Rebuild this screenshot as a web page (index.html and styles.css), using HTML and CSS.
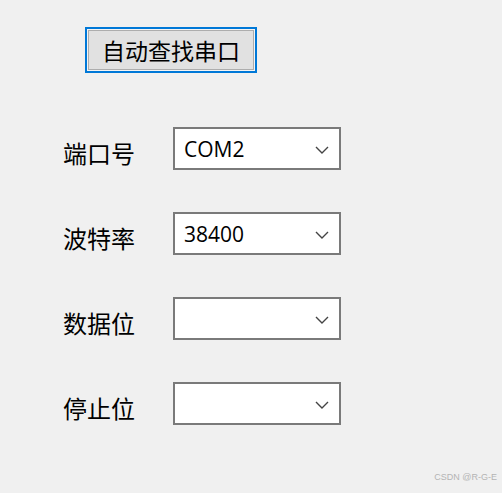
FILE: index.html
```html
<!DOCTYPE html>
<html lang="zh-CN">
<head>
  <meta charset="UTF-8" />
  <title>串口设置</title>
  <link rel="stylesheet" href="styles.css">
</head>
<body>

<div class="window">
  <button class="find-btn">自动查找串口</button>

  <div class="form">
    <div class="row">
      <span class="label">端口号</span>
      <div class="combo">
        <span class="value">COM2</span>
        <svg class="arrow" width="14" height="8" viewBox="0 0 14 8"><path d="M1 1 L7 7 L13 1" fill="none" stroke="#444" stroke-width="1.4"/></svg>
      </div>
    </div>
    <div class="row">
      <span class="label">波特率</span>
      <div class="combo">
        <span class="value">38400</span>
        <svg class="arrow" width="14" height="8" viewBox="0 0 14 8"><path d="M1 1 L7 7 L13 1" fill="none" stroke="#444" stroke-width="1.4"/></svg>
      </div>
    </div>
    <div class="row">
      <span class="label">数据位</span>
      <div class="combo">
        <span class="value"></span>
        <svg class="arrow" width="14" height="8" viewBox="0 0 14 8"><path d="M1 1 L7 7 L13 1" fill="none" stroke="#444" stroke-width="1.4"/></svg>
      </div>
    </div>
    <div class="row">
      <span class="label">停止位</span>
      <div class="combo">
        <span class="value"></span>
        <svg class="arrow" width="14" height="8" viewBox="0 0 14 8"><path d="M1 1 L7 7 L13 1" fill="none" stroke="#444" stroke-width="1.4"/></svg>
      </div>
    </div>
  </div>

  <div class="watermark">CSDN @R-G-E</div>
</div>

</body>
</html>
```

FILE: styles.css
```css
* {
  margin: 0;
  padding: 0;
  box-sizing: border-box;
}

body {
  font-family: "Noto Sans", "Noto Sans CJK SC", sans-serif;
  background-color: #f0f0f0;
  color: #000;
  width: 502px;
  height: 493px;
  overflow: hidden;
}

.window {
  position: relative;
  width: 502px;
  height: 493px;
  padding: 27px 0 0 85px;
}

.find-btn {
  display: block;
  width: 172px;
  height: 46px;
  background: #e1e1e1;
  border: 2px solid #0078d7;
  box-shadow: inset 0 0 0 1px #f4f4f4, inset 0 0 0 2px #adadad;
  font-family: "Noto Sans CJK SC", sans-serif;
  font-size: 23px;
  color: #000;
  padding: 0;
  line-height: 40px;
}

.form {
  margin: 54px 0 0 -22px;
  display: flex;
  flex-direction: column;
  gap: 42px;
}

.row {
  display: flex;
  align-items: center;
}

.label {
  width: 110px;
  font-family: "Noto Sans CJK SC", sans-serif;
  font-size: 24px;
  color: #000;
  padding-top: 7px;
}

.combo {
  width: 168px;
  height: 43px;
  background: #ffffff;
  border: 2px solid #7a7a7a;
  display: flex;
  align-items: center;
  justify-content: space-between;
  padding: 0 10px 0 9px;
}

.value {
  font-family: "Open Sans", "Noto Sans", sans-serif;
  font-size: 21px;
  color: #000;
}

.arrow {
  margin-top: 2px;
}

.watermark {
  position: absolute;
  right: 5px;
  bottom: 11px;
  font-family: "Liberation Sans", sans-serif;
  font-size: 9px;
  color: #b4b4b4;
}
```
